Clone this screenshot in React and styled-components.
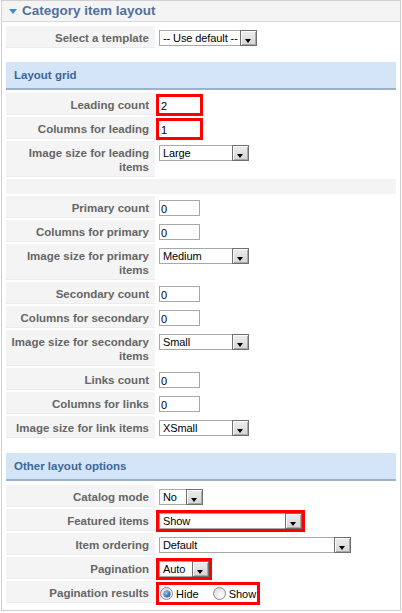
import React from "react";
import styled, { createGlobalStyle, css } from "styled-components";

const Global = createGlobalStyle`
  html, body { margin: 0; padding: 0; background: #fff; }
  body { font-family: "Liberation Sans", Arial, sans-serif; }
`;

const Panel = styled.div`
  margin: 0 1px;
  border: 1px solid #cfcfcf;
  background: #fff;
`;

const PanelHeader = styled.div`
  display: flex;
  align-items: center;
  height: 20px;
  background: #f4f4f4;
  border-bottom: 1px solid #d8d8d8;
  padding-left: 7px;
  gap: 5px;
`;

const PanelTitle = styled.span`
  font-size: 13.5px;
  font-weight: bold;
  color: #51709a;
  line-height: 20px;
`;

const PanelBody = styled.div`
  padding: 4px 4px 7px 4px;
`;

const Grid = styled.div`
  display: grid;
  grid-template-columns: 149px 1fr;
  column-gap: 2px;
  row-gap: 2px;
  margin-top: ${(p) => p.$top || 0}px;
`;

const Label = styled.div`
  box-sizing: border-box;
  background: #f4f4f4;
  border-bottom: 1px solid #ececec;
  padding: 5px 6px 2px 2px;
  min-height: 22px;
  text-align: right;
  font-size: 11.5px;
  font-weight: bold;
  line-height: 14px;
  color: #666;
`;

const Value = styled.div`
  display: flex;
  align-items: flex-start;
  padding: 4px 0 0 2px;
`;

const Spacer = styled.div`
  grid-column: 1 / -1;
  height: 15px;
  background: #f4f4f4;
`;

const SectionHeader = styled.div`
  height: 26px;
  margin-top: ${(p) => p.$top}px;
  background: #d4e5f8;
  border-bottom: 2px solid #9cb2cc;
  padding-left: 8px;
  display: flex;
  align-items: center;
  font-size: 11.5px;
  font-weight: bold;
  color: #3d6798;
`;

const redBox = css`
  outline: 3px solid #ff0000;
  border-color: #fff;
`;

const TextInput = styled.input`
  box-sizing: border-box;
  width: 41px;
  height: 16px;
  margin: 0;
  padding: 1px 1px 0;
  border: 1px solid #a8a8a8;
  font-family: "Liberation Sans", Arial, sans-serif;
  font-size: 11px;
  color: #000;
  background: #fff;
  ${(p) => p.$highlight && redBox}
`;

const SelectBox = styled.div`
  box-sizing: border-box;
  display: flex;
  width: ${(p) => p.$width}px;
  height: 16px;
  border: 1px solid #a8a8a8;
  background: #fff;
  ${(p) => p.$highlight && css`outline: 3px solid #ff0000;`}
`;

const SelectText = styled.span`
  flex: 1;
  padding-left: 3px;
  font-size: 11px;
  line-height: 14px;
  letter-spacing: -0.1px;
  color: #000;
  white-space: nowrap;
  overflow: hidden;
`;

const SelectArrow = styled.span`
  position: relative;
  flex: none;
  box-sizing: border-box;
  width: 17px;
  margin: -1px -1px -1px 0;
  border: 1px solid #6f6f6f;
  background: linear-gradient(#ececec, #d6d6d6);
  box-shadow: inset 1px 1px 0 #fafafa, inset -1px -1px 0 #a9a9a9;
  &::after {
    content: "";
    position: absolute;
    left: 4px;
    top: 8px;
    border-left: 3.5px solid transparent;
    border-right: 3.5px solid transparent;
    border-top: 4px solid #000;
  }
`;

const Select = ({ width, highlight, children }) => (
  <SelectBox $width={width} $highlight={highlight}>
    <SelectText>{children}</SelectText>
    <SelectArrow />
  </SelectBox>
);

const RadioGroup = styled.div`
  display: flex;
  align-items: center;
  gap: 14px;
  height: 17px;
  padding: 0 1px 0 1px;
  width: 98px;
  box-sizing: border-box;
  ${(p) => p.$highlight && css`outline: 3px solid #ff0000;`}
`;

const RadioOption = styled.label`
  display: inline-flex;
  align-items: center;
  gap: 3px;
  font-size: 11px;
  color: #000;
`;

const RadioDot = styled.span`
  position: relative;
  box-sizing: border-box;
  width: 13px;
  height: 13px;
  border-radius: 50%;
  border: 1px solid #8c8c8c;
  background: radial-gradient(circle at 65% 70%, #ffffff, #d4d4d4);
  ${(p) =>
    p.$checked &&
    css`
      &::after {
        content: "";
        position: absolute;
        left: 2.5px;
        top: 2.5px;
        width: 6px;
        height: 6px;
        border-radius: 50%;
        background: radial-gradient(circle at 35% 35%, #9fd0f7, #1d62ad 70%);
        box-shadow: 0 0 0 0.5px #1a4f8a;
      }
    `}
`;

const Caret = () => (
  <svg width="8" height="5" viewBox="0 0 8 5">
    <polygon points="0,0 8,0 4,5" fill="#3d8ad6" />
  </svg>
);

const Row = ({ label, children }) => (
  <>
    <Label>{label}</Label>
    <Value>{children}</Value>
  </>
);

export default function App() {
  return (
    <>
      <Global />
      <Panel>
        <PanelHeader>
          <Caret />
          <PanelTitle>Category item layout</PanelTitle>
        </PanelHeader>
        <PanelBody>
          <Grid>
            <Row label="Select a template">
              <Select width={98}>-- Use default --</Select>
            </Row>
          </Grid>

          <SectionHeader $top={14}>Layout grid</SectionHeader>
          <Grid $top={3}>
            <Row label="Leading count">
              <TextInput readOnly defaultValue="2" $highlight />
            </Row>
            <Row label="Columns for leading">
              <TextInput readOnly defaultValue="1" $highlight />
            </Row>
            <Row label="Image size for leading items">
              <Select width={90}>Large</Select>
            </Row>
            <Spacer />
            <Row label="Primary count">
              <TextInput readOnly defaultValue="0" />
            </Row>
            <Row label="Columns for primary">
              <TextInput readOnly defaultValue="0" />
            </Row>
            <Row label="Image size for primary items">
              <Select width={90}>Medium</Select>
            </Row>
            <Row label="Secondary count">
              <TextInput readOnly defaultValue="0" />
            </Row>
            <Row label="Columns for secondary">
              <TextInput readOnly defaultValue="0" />
            </Row>
            <Row label="Image size for secondary items">
              <Select width={90}>Small</Select>
            </Row>
            <Row label="Links count">
              <TextInput readOnly defaultValue="0" />
            </Row>
            <Row label="Columns for links">
              <TextInput readOnly defaultValue="0" />
            </Row>
            <Row label="Image size for link items">
              <Select width={90}>XSmall</Select>
            </Row>
          </Grid>

          <SectionHeader $top={15}>Other layout options</SectionHeader>
          <Grid $top={4}>
            <Row label="Catalog mode">
              <Select width={44}>No</Select>
            </Row>
            <Row label="Featured items">
              <Select width={143} highlight>Show</Select>
            </Row>
            <Row label="Item ordering">
              <Select width={192}>Default</Select>
            </Row>
            <Row label="Pagination">
              <Select width={50} highlight>Auto</Select>
            </Row>
            <Row label="Pagination results">
              <RadioGroup $highlight>
                <RadioOption>
                  <RadioDot $checked />
                  Hide
                </RadioOption>
                <RadioOption>
                  <RadioDot />
                  Show
                </RadioOption>
              </RadioGroup>
            </Row>
          </Grid>
        </PanelBody>
      </Panel>
    </>
  );
}
